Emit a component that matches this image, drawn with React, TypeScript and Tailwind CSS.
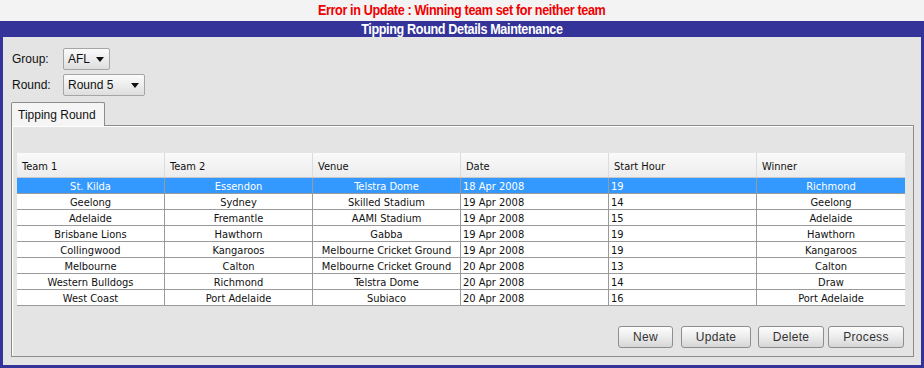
import React from "react";

const rows = [
  ["St. Kilda", "Essendon", "Telstra Dome", "18 Apr 2008", "19", "Richmond"],
  ["Geelong", "Sydney", "Skilled Stadium", "19 Apr 2008", "14", "Geelong"],
  ["Adelaide", "Fremantle", "AAMI Stadium", "19 Apr 2008", "15", "Adelaide"],
  ["Brisbane Lions", "Hawthorn", "Gabba", "19 Apr 2008", "19", "Hawthorn"],
  ["Collingwood", "Kangaroos", "Melbourne Cricket Ground", "19 Apr 2008", "19", "Kangaroos"],
  ["Melbourne", "Calton", "Melbourne Cricket Ground", "20 Apr 2008", "13", "Calton"],
  ["Western Bulldogs", "Richmond", "Telstra Dome", "20 Apr 2008", "14", "Draw"],
  ["West Coast", "Port Adelaide", "Subiaco", "20 Apr 2008", "16", "Port Adelaide"],
];

const headers = ["Team 1", "Team 2", "Venue", "Date", "Start Hour", "Winner"];
const centered = [true, true, true, false, false, true];

function Combo({ label, width }: { label: string; width: string }) {
  return (
    <div
      className={`${width} h-[22px] flex items-center justify-between pl-[4px] pr-[5px] border border-[#a5a5a5] rounded-[2px] bg-gradient-to-b from-[#fbfbfb] to-[#dedede] text-[12px] text-[#111]`}
    >
      <span>{label}</span>
      <svg width="8" height="5" viewBox="0 0 8 5">
        <path d="M0 0 L8 0 L4 5 Z" fill="#111" />
      </svg>
    </div>
  );
}

function Btn({ label, w }: { label: string; w: string }) {
  return (
    <div
      className={`${w} h-[22px] flex items-center justify-center border border-[#8e8e8e] rounded-[3px] bg-gradient-to-b from-[#fdfdfd] via-[#ececec] to-[#d6d6d6] text-[12px] text-[#333] tracking-[0.3px]`}
    >
      {label}
    </div>
  );
}

export default function App() {
  return (
    <div
      className="w-[924px] h-[368px] flex flex-col bg-[#f3f3f3] overflow-hidden"
      style={{ fontFamily: '"Liberation Sans", Arial, sans-serif' }}
    >
      <div className="h-[21px] flex items-center justify-center">
        <span className="inline-block text-[#f00000] font-bold text-[14px] tracking-[-0.4px] scale-x-[0.9]">
          Error in Update : Winning team set for neither team
        </span>
      </div>
      <div className="flex-1 flex flex-col border-x-[3px] border-b-[3px] border-[#333399]">
        <div className="h-[16px] bg-[#333399] flex items-center justify-center">
          <span className="inline-block text-white font-bold text-[14px] tracking-[-0.4px] scale-x-[0.9]">
            Tipping Round Details Maintenance
          </span>
        </div>
        <div className="flex-1 bg-[#e4e4e4] flex flex-col pt-[11px] pl-[8px] pr-[7px] pb-[8px]">
          <div className="flex items-center h-[22px]">
            <span className="w-[52px] pl-[1px] text-[12px] text-[#111]">Group:</span>
            <Combo label="AFL" width="w-[47px]" />
          </div>
          <div className="flex items-center h-[22px] mt-[4px]">
            <span className="w-[52px] pl-[1px] text-[12px] text-[#111]">Round:</span>
            <Combo label="Round 5" width="w-[82px]" />
          </div>
          <div className="mt-[6px] flex flex-col flex-1">
            <div className="flex">
              <div className="w-[94px] h-[24px] border border-b-0 border-[#8c8c8c] rounded-t-[2px] bg-[#f5f5f5] flex items-center pl-[6px] text-[12px] text-[#111] relative z-10 -mb-px">
                Tipping Round
              </div>
            </div>
            <div className="flex-1 border border-[#8c8c8c] bg-[#e4e4e4] flex flex-col px-[5px] pt-[27px] pb-[8px] shadow-[inset_1px_1px_0_#ffffff]">
              <div
                className="w-[888px] flex flex-col text-[11px] text-[#111]"
                style={{ fontFamily: '"DejaVu Sans Condensed", Tahoma, "Liberation Sans", sans-serif' }}
              >
                <div className="flex h-[25px] bg-gradient-to-b from-[#fafafa] to-[#ececec] border-b border-[#c8c8c8]">
                  {headers.map((h, i) => (
                    <div
                      key={h}
                      className={`w-[148px] flex items-center pl-[5px] pt-[4px] ${i < 5 ? "border-r border-[#dcdcdc]" : ""}`}
                    >
                      {h}
                    </div>
                  ))}
                </div>
                {rows.map((r, ri) => (
                  <div
                    key={ri}
                    className={`flex h-[16px] border-b border-[#9a9a9a] ${ri === 0 ? "bg-[#3399ff] text-white" : "bg-white"}`}
                  >
                    {r.map((c, ci) => (
                      <div
                        key={ci}
                        className={`w-[148px] flex items-center leading-none pt-[1px] ${centered[ci] ? "justify-center" : "pl-[2px]"} ${ci < 5 ? "border-r border-[#9a9a9a]" : ""}`}
                      >
                        {c}
                      </div>
                    ))}
                  </div>
                ))}
              </div>
              <div className="flex-1" />
              <div className="flex justify-end pr-[4px]">
                <Btn label="New" w="w-[55px]" />
                <div className="w-[8px]" />
                <Btn label="Update" w="w-[70px]" />
                <div className="w-[7px]" />
                <Btn label="Delete" w="w-[66px]" />
                <div className="w-[4px]" />
                <Btn label="Process" w="w-[76px]" />
              </div>
            </div>
          </div>
        </div>
      </div>
    </div>
  );
}
